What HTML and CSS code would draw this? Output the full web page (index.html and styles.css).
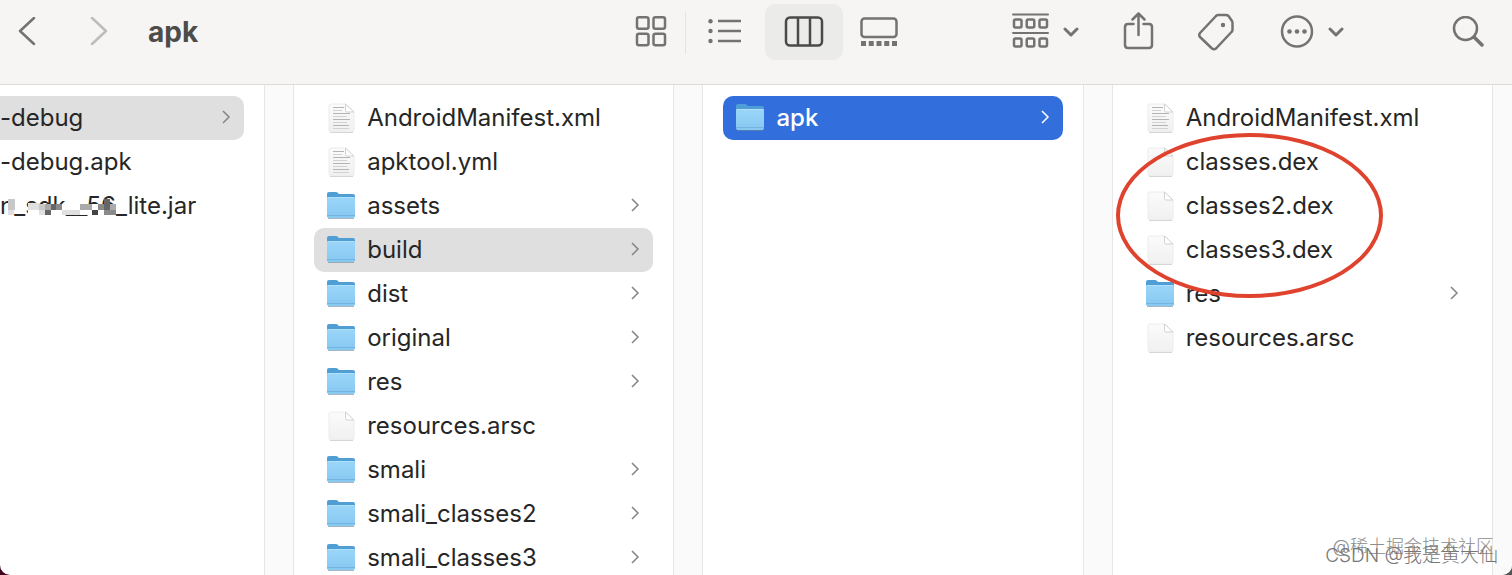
FILE: index.html
```html
<!DOCTYPE html>
<html lang="en">
<head>
  <meta charset="UTF-8">
  <title>apk</title>
  <link rel="stylesheet" href="styles.css">
</head>
<body>
<!-- shared icons -->
<svg class="defs" width="0" height="0" aria-hidden="true">
  <linearGradient id="folder-front" x1="0" y1="0" x2="0" y2="1">
    <stop offset="0" stop-color="#9bd6f9"/>
    <stop offset="1" stop-color="#86c8f2"/>
  </linearGradient>
  <linearGradient id="page-fill" x1="0" y1="0" x2="0" y2="1">
    <stop offset="0" stop-color="#fbfbfb"/>
    <stop offset="1" stop-color="#f0f0f0"/>
  </linearGradient>
  <symbol id="folder" viewBox="0 0 30 30">
    <path d="M1 26V3q0-2 2-2h7q1 0 2 1l1 1h14q2 0 2 2v21z" fill="#4f9fd6"/>
    <path d="M1 7.500q0-1.500 1.500-1.500h25q1.500 0 1.500 1.500V25q0 2-2 2H3q-2 0-2-2z" fill="url(#folder-front)"/>
    <path d="M1.500 6.500h27" stroke="#b0e0fb"/>
    <path d="M1 24.500h28" stroke="#74b5e0"/>
    <path d="M2 27.500h26" stroke="#6f8796" stroke-opacity=".6"/>
  </symbol>
  <symbol id="page" viewBox="0 0 30 30">
    <path d="M5 1h15l8 8v18q0 2-2 2H5q-2 0-2-2V3q0-2 2-2z" fill="url(#page-fill)" stroke="#ececec"/>
    <path d="M4 29.500h23" stroke="#d6d6d6"/>
    <path d="M19.500 1v6.500q0 1.500 1.500 1.500h7z" fill="#fff" stroke="#d2d2d2"/>
  </symbol>
  <symbol id="text-page" viewBox="0 0 30 30">
    <use href="#page"/>
    <path d="M7 4.500h11M7 10.500h17M7 16.500h17M7 22.500h16" stroke="#b4b4b4"/>
    <path d="M7 7.500h9M7 13.500h14M7 19.500h14M7 25.500h16" stroke="#d2d2d2"/>
  </symbol>
  <symbol id="more-right" viewBox="0 0 10 16">
    <path d="M2 1l6 6-6 6" fill="none" stroke="currentColor" stroke-width="1.500"/>
  </symbol>
  <symbol id="drop" viewBox="0 0 16 10">
    <path d="M2 2l6 6 6-6" fill="none" stroke="currentColor" stroke-width="3" stroke-linecap="round" stroke-linejoin="round"/>
  </symbol>
</svg>

<div class="window">
  <header class="toolbar">
    <button class="tool back" aria-label="Back">
      <svg width="18" height="30" viewBox="0 0 18 30"><path d="M16 1L2 14l14 13"/></svg>
    </button>
    <button class="tool forward" aria-label="Forward" disabled>
      <svg width="18" height="30" viewBox="0 0 18 30"><path d="M2 1l14 13L2 27"/></svg>
    </button>
    <h1 class="title">apk</h1>

    <div class="views">
      <button class="tool view icons" aria-label="Icons">
        <svg width="32" height="32" viewBox="0 0 32 32">
          <rect x="2" y="1.250" width="11.500" height="11.500" rx="2"/>
          <rect x="18.500" y="1.250" width="11.500" height="11.500" rx="2"/>
          <rect x="2" y="17.750" width="11.500" height="11.500" rx="2"/>
          <rect x="18.500" y="17.750" width="11.500" height="11.500" rx="2"/>
        </svg>
      </button>
      <button class="tool view ruled" aria-label="List">
        <svg width="34" height="26" viewBox="0 0 34 26">
          <path d="M10 2h23M10 12h23M10 22h23"/>
          <g class="solid"><circle cx="2.500" cy="2.200" r="2.200"/><circle cx="2.500" cy="12" r="2.200"/><circle cx="2.500" cy="22" r="2.200"/></g>
        </svg>
      </button>
      <button class="tool view current" aria-label="Columns" aria-pressed="true">
        <svg width="40" height="32" viewBox="0 0 40 32">
          <rect x="2" y="1.500" width="36" height="28" rx="4"/>
          <path d="M14 2v27M26 2v27"/>
        </svg>
      </button>
      <button class="tool view gallery" aria-label="Gallery">
        <svg width="38" height="30" viewBox="0 0 38 30">
          <rect x="1.500" y="1.500" width="35" height="18.500" rx="3"/>
          <path d="M1 26.500h36" stroke-width="5" stroke-dasharray="5 2.750"/>
        </svg>
      </button>
    </div>

    <div class="actions">
      <button class="tool menu" aria-label="Group">
        <svg width="37" height="38" viewBox="0 0 37 38">
          <path d="M1 1.500h35M1 20h35" stroke-width="2"/>
          <rect x="2" y="6.500" width="7.500" height="8" rx="1.500"/><rect x="14.750" y="6.500" width="7.500" height="8" rx="1.500"/><rect x="27.500" y="6.500" width="7.500" height="8" rx="1.500"/>
          <rect x="2" y="25.500" width="7.500" height="8" rx="1.500"/><rect x="14.750" y="25.500" width="7.500" height="8" rx="1.500"/><rect x="27.500" y="25.500" width="7.500" height="8" rx="1.500"/>
        </svg>
        <svg width="16" height="10"><use href="#drop"/></svg>
      </button>
      <button class="tool" aria-label="Share">
        <svg width="31" height="40" viewBox="0 0 31 40">
          <path d="M10.500 12H5q-3 0-3 3v18q0 3 3 3h21q3 0 3-3V15q0-3-3-3h-5.500M15.500 23V1.500M9.500 7.500l6-6 6 6"/>
        </svg>
      </button>
      <button class="tool" aria-label="Tags">
        <svg width="38" height="38" viewBox="0 0 38 38">
          <path d="M20 2h8q1.500 0 2.500 1l3.500 5q.5 1 .5 2v7q0 1-1 2L18 35.500q-2 1.500-4 0L2 24q-1.500-2 0-4L18 3q1-1 2-1z"/>
          <circle class="solid" cx="25" cy="12" r="2.200"/>
        </svg>
      </button>
      <button class="tool menu" aria-label="More actions">
        <svg width="34" height="34" viewBox="0 0 34 34">
          <circle cx="17" cy="16.500" r="15"/>
          <g class="solid"><circle cx="9.500" cy="16.500" r="2.300"/><circle cx="17" cy="16.500" r="2.300"/><circle cx="24.500" cy="16.500" r="2.300"/></g>
        </svg>
        <svg width="16" height="10"><use href="#drop"/></svg>
      </button>
    </div>

    <button class="tool" aria-label="Search">
      <svg width="32" height="32" viewBox="0 0 32 32">
        <circle cx="13.500" cy="12.500" r="11.500"/>
        <path d="M22 21l8 8" stroke-width="3.500"/>
      </svg>
    </button>
  </header>

  <main class="browser">
    <ul class="column first">
      <li><a class="item open" href="#"><span class="name">-debug</span><svg class="arrow"><use href="#more-right"/></svg></a></li>
      <li><a class="item" href="#"><span class="name">-debug.apk</span></a></li>
      <li>
        <a class="item" href="#">
          <span class="name"><span class="masked">n_sdk__56<svg class="mosaic" viewBox="0 0 117 16" preserveAspectRatio="none" shape-rendering="crispEdges">
            <path fill="#fff" d="M28 5h89v11H28z"/>
            <path fill="#c8c8c8" d="M8 0h7v11H8zM39 5h6v6h-6z"/>
            <path fill="#e0e0e0" d="M8 11h6v5H8zM28 4h11v7H28zM39 11h6v5h-6zM63 11h18v5H63z"/>
            <path fill="#aaa" d="M45 5h6v6h-6zM81 5h12v6H81zM111 5h6v6h-6z"/>
            <path fill="#8a8a8a" d="M57 5h6v6h-6zM99 5h6v6h-6zM105 11h12v5h-12z"/>
            <path fill="#666" d="M45 11h6v5h-6zM51 5h6v6h-6zM105 0h6v11h-6z"/>
            <path fill="#444" d="M93 11h6v5h-6z"/>
          </svg></span>_lite.jar</span>
        </a>
      </li>
    </ul>
    <div class="gutter"></div>

    <ul class="column">
      <li><a class="item" href="#"><svg class="icon"><use href="#text-page"/></svg><span class="name">AndroidManifest.xml</span></a></li>
      <li><a class="item" href="#"><svg class="icon"><use href="#text-page"/></svg><span class="name">apktool.yml</span></a></li>
      <li><a class="item" href="#"><svg class="icon"><use href="#folder"/></svg><span class="name">assets</span><svg class="arrow"><use href="#more-right"/></svg></a></li>
      <li><a class="item open" href="#"><svg class="icon"><use href="#folder"/></svg><span class="name">build</span><svg class="arrow"><use href="#more-right"/></svg></a></li>
      <li><a class="item" href="#"><svg class="icon"><use href="#folder"/></svg><span class="name">dist</span><svg class="arrow"><use href="#more-right"/></svg></a></li>
      <li><a class="item" href="#"><svg class="icon"><use href="#folder"/></svg><span class="name">original</span><svg class="arrow"><use href="#more-right"/></svg></a></li>
      <li><a class="item" href="#"><svg class="icon"><use href="#folder"/></svg><span class="name">res</span><svg class="arrow"><use href="#more-right"/></svg></a></li>
      <li><a class="item" href="#"><svg class="icon"><use href="#page"/></svg><span class="name">resources.arsc</span></a></li>
      <li><a class="item" href="#"><svg class="icon"><use href="#folder"/></svg><span class="name">smali</span><svg class="arrow"><use href="#more-right"/></svg></a></li>
      <li><a class="item" href="#"><svg class="icon"><use href="#folder"/></svg><span class="name">smali_classes2</span><svg class="arrow"><use href="#more-right"/></svg></a></li>
      <li><a class="item" href="#"><svg class="icon"><use href="#folder"/></svg><span class="name">smali_classes3</span><svg class="arrow"><use href="#more-right"/></svg></a></li>
    </ul>
    <div class="gutter"></div>

    <ul class="column">
      <li><a class="item selected" href="#"><svg class="icon"><use href="#folder"/></svg><span class="name">apk</span><svg class="arrow"><use href="#more-right"/></svg></a></li>
    </ul>
    <div class="gutter"></div>

    <ul class="column">
      <li><a class="item" href="#"><svg class="icon"><use href="#text-page"/></svg><span class="name">AndroidManifest.xml</span></a></li>
      <li><a class="item" href="#"><svg class="icon"><use href="#page"/></svg><span class="name">classes.dex</span></a></li>
      <li><a class="item" href="#"><svg class="icon"><use href="#page"/></svg><span class="name">classes2.dex</span></a></li>
      <li><a class="item" href="#"><svg class="icon"><use href="#page"/></svg><span class="name">classes3.dex</span></a></li>
      <li><a class="item" href="#"><svg class="icon"><use href="#folder"/></svg><span class="name">res</span><svg class="arrow"><use href="#more-right"/></svg></a></li>
      <li><a class="item" href="#"><svg class="icon"><use href="#page"/></svg><span class="name">resources.arsc</span></a></li>
      <!-- red ring round the dex files -->
      <li class="ring" aria-hidden="true"></li>
    </ul>
    <div class="gutter"></div>
  </main>

  <p class="mark community">@稀土掘金技术社区</p>
  <p class="mark author">CSDN @我是黄大仙</p>
</div>
</body>
</html>
```
FILE: styles.css
```css
* {
  box-sizing: border-box;
  margin: 0;
  padding: 0;
}

body {
  background: linear-gradient(to right, #42051f, #555);
  font-family: Inter, "Noto Sans CJK SC", sans-serif;
  color: #262626;
}

ul {
  list-style: none;
}

.defs {
  position: absolute;
}

.window {
  position: relative;
  display: flex;
  flex-direction: column;
  height: 100vh;
  overflow: hidden;
  background: #fff;
  border-radius: 0 0 10px 10px;
}

/* toolbar */
.toolbar {
  display: flex;
  align-items: center;
  padding: 4px 28px 24px 18px;
  background: #f6f5f3;
  border-bottom: 1px solid #dcdcdb;
}

.tool {
  display: flex;
  align-items: center;
  justify-content: center;
  height: 56px;
  border: 0;
  background: none;
  color: #737371;
}

.tool svg {
  fill: none;
  stroke: currentColor;
  stroke-width: 2.5;
  stroke-linecap: round;
  stroke-linejoin: round;
}

.tool .solid {
  fill: currentColor;
  stroke: none;
}

.forward {
  margin-left: 54px;
  color: #bcbcba;
}

.title {
  flex: 1;
  margin-left: 40px;
  font-size: 28px;
  line-height: 34px;
  color: #4c4c4a;
}

.views {
  display: flex;
}

.icons {
  width: 68px;
}

.view svg {
  stroke-linecap: butt;
}

.ruled {
  position: relative;
  width: 80px;
}

.ruled::before {
  content: "";
  position: absolute;
  left: 0;
  top: 8px;
  width: 1px;
  height: 42px;
  background: #e4e4e2;
}

.current {
  width: 78px;
  border-radius: 10px;
  background: #ebebe9;
  color: #4a4a48;
}

.gallery {
  width: 72px;
}

.actions {
  display: flex;
  gap: 44px;
  margin: 0 108px 0 97px;
}

.menu {
  gap: 14px;
}

/* columns */
.browser {
  flex: 1;
  display: grid;
  grid-template-columns: 264fr 30px 379fr 30px 379fr 30px 379fr 20px;
  min-height: 0;
}

.column {
  position: relative;
  min-width: 0;
  padding: 11px 20px;
}

.first {
  padding-left: 0;
}

.gutter {
  border: 1px solid #e6e6e6;
  border-width: 0 1px;
  background: #fafafa;
}

.gutter:last-child {
  border-right: 0;
}

.item {
  display: flex;
  align-items: center;
  gap: 11px;
  height: 44px;
  padding: 0 13px 0 12px;
  border-radius: 10px;
  font-size: 24px;
  line-height: 30px;
  color: inherit;
  text-decoration: none;
}

.first .item {
  padding-left: 0;
  border-radius: 0 10px 10px 0;
}

.open {
  background: #dfdfdf;
}

.selected {
  background: #336fdc;
  color: #fff;
  font-weight: 500;
}

.icon {
  flex: none;
  width: 30px;
  height: 30px;
}

.name {
  flex: 1;
  white-space: nowrap;
}

.arrow {
  flex: none;
  width: 10px;
  height: 16px;
  color: #858585;
}

.selected .arrow {
  color: #fff;
}

.masked {
  position: relative;
}

.mosaic {
  position: absolute;
  left: 0;
  bottom: 5px;
  width: 100%;
  height: 16px;
}

.ring {
  position: absolute;
  top: 48px;
  left: 3px;
  width: 267px;
  height: 165px;
  border: 4px solid #df432e;
  border-radius: 50%;
  pointer-events: none;
}

/* watermarks */
.mark {
  position: absolute;
  font-size: 18px;
  line-height: 20px;
  font-weight: 300;
  white-space: nowrap;
}

.community {
  right: 18px;
  bottom: 18px;
  color: #8c8c8c;
}

.author {
  right: 14px;
  bottom: 9px;
  font-size: 19px;
  color: #777;
}
```
